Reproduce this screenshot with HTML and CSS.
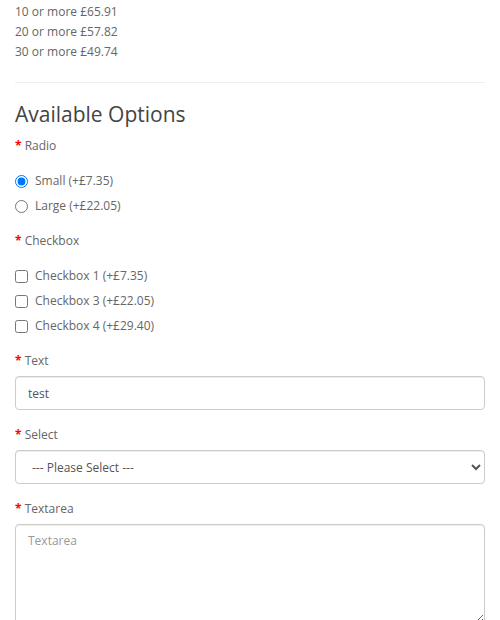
FILE: index.html
```html
<!DOCTYPE html>
<html lang="en">
<head>
<meta charset="utf-8">
<title>Product options</title>
<link rel="stylesheet" href="styles.css">
</head>
<body>
<div class="page">
  <ul class="discounts">
    <li>10 or more £65.91</li>
    <li>20 or more £57.82</li>
    <li>30 or more £49.74</li>
  </ul>
  <hr class="divider">
  <h3 class="heading">Available Options</h3>
  <form class="options">
    <div class="group">
      <div class="label"><span class="req">*</span> Radio</div>
      <div class="choices">
        <label class="choice"><input type="radio" name="radio" checked> Small (+£7.35)</label>
        <label class="choice"><input type="radio" name="radio"> Large (+£22.05)</label>
      </div>
    </div>
    <div class="group">
      <div class="label"><span class="req">*</span> Checkbox</div>
      <div class="choices">
        <label class="choice"><input type="checkbox"> Checkbox 1 (+£7.35)</label>
        <label class="choice"><input type="checkbox"> Checkbox 3 (+£22.05)</label>
        <label class="choice"><input type="checkbox"> Checkbox 4 (+£29.40)</label>
      </div>
    </div>
    <div class="group field-group">
      <label class="label" for="opt-text"><span class="req">*</span> Text</label>
      <input id="opt-text" class="control" type="text" value="test">
    </div>
    <div class="group field-group">
      <label class="label" for="opt-select"><span class="req">*</span> Select</label>
      <select id="opt-select" class="control">
        <option>--- Please Select ---</option>
      </select>
    </div>
    <div class="group field-group">
      <label class="label" for="opt-textarea"><span class="req">*</span> Textarea</label>
      <textarea id="opt-textarea" class="control area" placeholder="Textarea"></textarea>
    </div>
  </form>
</div>
</body>
</html>
```
FILE: styles.css
```css
html, body {
  margin: 0;
  padding: 0;
  background: #fff;
}
body {
  font-family: "Open Sans", "Liberation Sans", sans-serif;
  font-size: 12px;
  line-height: 20px;
  color: #666;
}
.page {
  padding: 2px 15px 0;
}
.discounts {
  list-style: none;
  margin: 0;
  padding: 0;
}
.divider {
  margin: 20px 0 0;
  border: 0;
  border-top: 1px solid #eee;
  height: 0;
}
.heading {
  margin: 20px 0 10px;
  font-size: 21px;
  font-weight: 500;
  line-height: 23px;
  color: #444;
}
.options {
  display: flex;
  flex-direction: column;
  gap: 14px;
}
.group {
  display: flex;
  flex-direction: column;
}
.field-group {
  padding-bottom: 1px;
}
.label {
  display: block;
  line-height: 20px;
  margin-bottom: 5px;
  color: #666;
}
.req {
  color: #f00;
  font-weight: bold;
}
.choices {
  display: flex;
  flex-direction: column;
  gap: 5px;
  padding-top: 10px;
  margin-bottom: 1px;
}
.choice {
  display: flex;
  align-items: center;
  gap: 7px;
  line-height: 20px;
}
.choice input {
  margin: 0;
  width: 13px;
  height: 13px;
}
.control {
  box-sizing: border-box;
  width: 100%;
  height: 34px;
  margin: 0;
  padding: 6px 12px;
  font-family: inherit;
  font-size: 12px;
  line-height: 20px;
  color: #555;
  background: #fff;
  border: 1px solid #ccc;
  border-radius: 4px;
  box-shadow: inset 0 1px 1px rgba(0,0,0,0.075);
}
.area {
  height: 100px;
  resize: vertical;
}
.area::placeholder {
  color: #999;
}
```
